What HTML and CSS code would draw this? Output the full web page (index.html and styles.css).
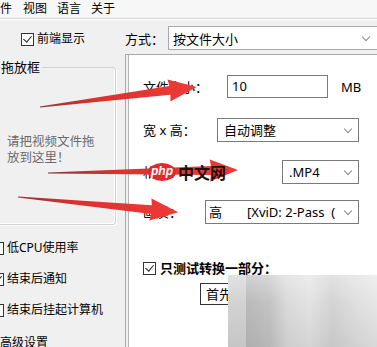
FILE: index.html
```html
<!DOCTYPE html>
<html lang="zh-CN">
<head>
  <meta charset="UTF-8">
  <meta name="viewport" content="width=device-width, initial-scale=1.0">
  <title>视频转换</title>
  <link rel="stylesheet" href="styles.css">
</head>
<body>
  <!-- 菜单栏 -->
  <div class="menubar">
    <span class="menu-item first">件</span>
    <span class="menu-item">视图</span>
    <span class="menu-item">语言</span>
    <span class="menu-item">关于</span>
  </div>

  <div class="main">
    <!-- 左侧 -->
    <div class="left">
      <label class="check top-check"><span class="box on"></span>前端显示</label>

      <div class="dropbox">
        <span class="legend">拖放框</span>
        <p class="hint">请把视频文件拖<br>放到这里！</p>
      </div>

      <label class="check side"><span class="box"></span>低CPU使用率</label>
      <label class="check side"><span class="box on"></span>结束后通知</label>
      <label class="check side"><span class="box"></span>结束后挂起计算机</label>
      <div class="advanced">高级设置</div>
    </div>

    <!-- 右侧 -->
    <div class="right">
      <div class="mode-row">
        <span class="mode-label">方式：</span>
        <div class="select mode-select"><span>按文件大小</span><i class="chev"></i></div>
      </div>

      <div class="panel">
        <div class="row">
          <span class="label">文件大小：</span>
          <div class="size-group">
            <div class="textbox">10</div>
            <span class="unit">MB</span>
          </div>
        </div>
        <div class="row r2">
          <span class="label">宽 x 高：</span>
          <div class="select w-size"><span>自动调整</span><i class="chev"></i></div>
        </div>
        <div class="row r3">
          <span class="label">格式：</span>
          <div class="select w-format"><span>.MP4</span><i class="chev"></i></div>
        </div>
        <div class="row r4">
          <span class="label">画质：</span>
          <div class="select w-quality"><span>高</span><span class="codec">[XviD: 2-Pass&nbsp;&nbsp;(</span><i class="chev"></i></div>
        </div>

        <label class="check part"><span class="box on"></span>只测试转换一部分：</label>
        <div class="first-box">首先</div>
      </div>
    </div>
  </div>

  <!-- 箭头标注 -->
  <svg class="arrows" width="377" height="347" viewBox="0 0 377 347">
    <defs>
      <linearGradient id="red" x1="0" y1="0" x2="1" y2="0">
        <stop offset="0" stop-color="#8a3a3a"/>
        <stop offset="0.35" stop-color="#d9312f"/>
        <stop offset="1" stop-color="#f03a36"/>
      </linearGradient>
    </defs>
    <g transform="translate(40 107) rotate(-7.3)">
      <polygon points="0,-0.6 131,-4.5 130,-11 158,0 130,11 131,4.5 0,0.6" fill="url(#red)"/>
    </g>
    <g transform="translate(48 173) rotate(-0.9)">
      <polygon points="0,-0.6 163,-4.5 162,-11 190,0 162,11 163,4.5 0,0.6" fill="url(#red)"/>
    </g>
    <g transform="translate(18 197) rotate(5.4)">
      <polygon points="0,-0.6 134,-4.5 133,-11 161,0 133,11 134,4.5 0,0.6" fill="url(#red)"/>
    </g>
  </svg>

  <!-- 水印 -->
  <div class="watermark">
    <span class="php">php</span><span class="cn">中文网</span>
  </div>

  <div class="mosaic"></div>
</body>
</html>
```

FILE: styles.css
```css
/* 页面 */
body {
  margin: 0;
  width: 377px;
  height: 347px;
  overflow: hidden;
  position: relative;
  background: #f0f0f0;
  font-family: "Noto Sans", "Noto Sans CJK SC", sans-serif;
  font-size: 12px;
  color: #000;
}

/* 菜单栏 */
.menubar {
  height: 18px;
  display: flex;
  align-items: center;
  background: #f7f7f7;
  border-bottom: 1px solid #d4d4d4;
  box-shadow: 0 1px 0 #fff;
}

.menu-item {
  line-height: 14px;
  margin-right: 10px;
}

.menu-item.first {
  margin-right: 11px;
}

/* 主体 */
.main {
  display: flex;
}

.left {
  width: 116px;
  flex-shrink: 0;
}

/* 复选框 */
.check {
  display: flex;
  align-items: center;
  height: 16px;
  line-height: 16px;
  white-space: nowrap;
}

.box {
  width: 11px;
  height: 11px;
  border: 1px solid #333;
  background: #fff;
  margin-right: 3px;
  flex-shrink: 0;
  position: relative;
}

.box.on::after {
  content: "";
  position: absolute;
  left: 3px;
  top: 0px;
  width: 4px;
  height: 7px;
  border: solid #222;
  border-width: 0 1.4px 1.4px 0;
  transform: rotate(40deg);
}

.top-check {
  margin-top: 12px;
  padding-left: 21px;
}

/* 拖放框 */
.dropbox {
  margin-top: 20px;
  margin-left: -10px;
  height: 156px;
  border: 1px solid #d3d3d3;
  border-radius: 0 3px 3px 0;
  box-shadow: inset -1px -1px 0 #fff, 1px 1px 0 #fff;
  padding-left: 10px;
}

.legend {
  display: block;
  width: fit-content;
  margin-top: -9px;
  padding-right: 2px;
  background: #f0f0f0;
  font-size: 13px;
  line-height: 16px;
}

.hint {
  margin: 59px 0 0 6px;
  color: #6b6b6b;
  font-size: 12.5px;
  line-height: 16px;
  white-space: nowrap;
}

.side {
  margin-left: -9px;
  margin-top: 15px;
}

.side:first-of-type {
  margin-top: 16px;
}

.advanced {
  margin-top: 17px;
  line-height: 16px;
}

/* 右侧 */
.right {
  flex: 1;
  margin-left: 9px;
  margin-right: -10px;
}

.mode-row {
  display: flex;
  align-items: center;
  height: 24px;
  margin-top: 7px;
}

.mode-label {
  width: 43px;
  font-size: 13px;
}

.select {
  display: flex;
  align-items: center;
  height: 22px;
  background: #fff;
  border: 1px solid #7a7a7a;
  font-size: 13px;
  padding-left: 6px;
  position: relative;
  overflow: hidden;
  white-space: nowrap;
}

.mode-select {
  flex: 1;
  border-color: #a8a8a8;
  padding-left: 4px;
}

.chev {
  position: absolute;
  right: 7px;
  top: 7px;
  width: 5px;
  height: 5px;
  border: solid #8a8a8a;
  border-width: 0 1px 1px 0;
  transform: rotate(45deg);
  background: #fff;
  box-shadow: 3px 3px 0 4px #fff;
}

.mode-select .chev {
  right: 17px;
}

/* 白色面板 */
.panel {
  margin-top: 4px;
  height: 277px;
  background: #fff;
  border: 1px solid #a9a9a9;
  box-shadow: inset 2px 0 0 #f0f0f0, inset 3px 0 0 #b5b5b5;
  padding: 20px 27px 0 17px;
}

.row {
  display: flex;
  align-items: center;
  justify-content: space-between;
  height: 23px;
  font-size: 13px;
}

.r2 {
  margin-top: 20px;
}

.r3 {
  margin-top: 19px;
}

.r4 {
  margin-top: 17px;
}

.size-group {
  display: flex;
  align-items: center;
}

.textbox {
  width: 95px;
  height: 21px;
  line-height: 21px;
  border: 1px solid #7a7a7a;
  padding-left: 4px;
}

.unit {
  margin-left: 13px;
  width: 18px;
}

.w-size {
  width: 134px;
}

.w-format {
  width: 69px;
}

.w-quality {
  width: 149px;
  padding-left: 3px;
}

.codec {
  margin-left: 25px;
}

.part {
  margin-top: 37px;
  font-size: 13px;
  font-weight: bold;
}

.part .box {
  margin-right: 4px;
}

.first-box {
  margin: 7px 0 0 57px;
  width: 60px;
  height: 20px;
  line-height: 20px;
  border: 1px solid #333;
  font-size: 13px;
  padding-left: 5px;
}

/* 叠加层 */
.arrows {
  position: absolute;
  left: 0;
  top: 0;
  pointer-events: none;
}

.watermark {
  position: absolute;
  left: 148px;
  top: 163px;
  display: flex;
  align-items: center;
}

.php {
  width: 28px;
  height: 18px;
  border-radius: 50%;
  background: #e22a2e;
  color: #fff;
  font-family: "Liberation Sans", sans-serif;
  font-style: italic;
  font-weight: bold;
  font-size: 12px;
  line-height: 17px;
  text-align: center;
}

.cn {
  margin-left: 2px;
  font-family: "Noto Sans CJK SC", sans-serif;
  font-weight: bold;
  font-size: 16px;
  line-height: 18px;
  color: #1a1010;
}

.mosaic {
  position: absolute;
  left: 228px;
  top: 275px;
  width: 149px;
  height: 72px;
  background:
    linear-gradient(180deg, rgba(255, 255, 255, 0.35), rgba(255, 255, 255, 0) 40%, rgba(0, 0, 0, 0.06)),
    linear-gradient(90deg, #d2d2d2 0, #d2d2d2 12%, #b9b9b9 12%, #c3c3c3 28%, #dadada 40%, #e2e2e2 55%, #d3d3d3 70%, #dedede 85%, #e6e6e6 100%);
}
```
